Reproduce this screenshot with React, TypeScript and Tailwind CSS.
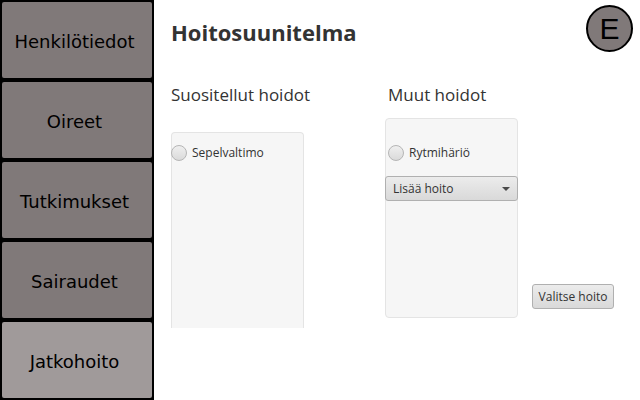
import React from "react";

const steps = ["Henkilötiedot", "Oireet", "Tutkimukset", "Sairaudet", "Jatkohoito"];
const current = "Jatkohoito";

function Sidebar() {
  return (
    <nav className="flex w-[154px] shrink-0 flex-col bg-black font-['DejaVu_Sans',sans-serif] text-[18px] leading-6">
      {steps.map((step) => (
        <button
          key={step}
          type="button"
          aria-current={step === current ? "page" : undefined}
          className={`h-20 rounded border-2 border-black pt-[3px] pr-[5px] text-center text-black ${
            step === current ? "bg-[#a09a9a]" : "bg-[#807979]"
          }`}
        >
          {step}
        </button>
      ))}
    </nav>
  );
}

function TreatmentRadio({ label }: { label: string }) {
  return (
    <label className="flex h-4 items-center gap-[5px] text-[12px] leading-4">
      <input
        type="radio"
        name="treatment"
        className="size-4 shrink-0 appearance-none rounded-full border border-[#b5b5b5] bg-linear-to-b from-[#efefef] to-[#dadada] checked:border-[#555555]"
      />
      {label}
    </label>
  );
}

export default function App() {
  return (
    <div className="flex min-h-screen bg-white font-['Open_Sans','Noto_Sans',sans-serif] text-[#333333]">
      <Sidebar />
      <main className="flex-1 pl-[17px]">
        <header className="flex h-[57px] items-center justify-between pr-[7px]">
          <h1 className="pt-1.5 text-[22px] leading-8 font-bold">Hoitosuunitelma</h1>
          <button
            type="button"
            className="size-[47px] rounded-full border-2 border-black bg-[#807979] text-center font-['Liberation_Sans',sans-serif] text-[30px] leading-10 text-black"
          >
            E
          </button>
        </header>

        <div className="flex items-start pt-[26px]">
          <section className="w-[133px]">
            <h2 className="text-[17px] leading-6 whitespace-nowrap">Suositellut hoidot</h2>
            <div className="mt-[25px] h-[196px] rounded-t-sm border border-b-0 border-[#e4e4e4] bg-[#f6f6f6] pt-3">
              <div className="-ml-px">
                <TreatmentRadio label="Sepelvaltimo" />
              </div>
            </div>
          </section>

          <section className="ml-[81px] w-[133px]">
            <h2 className="pl-[3px] text-[17px] leading-6 whitespace-nowrap">Muut hoidot</h2>
            <div className="mt-[11px] h-[200px] rounded-sm border border-[#e4e4e4] bg-[#f6f6f6] pt-[26px]">
              <div className="pl-[2px]">
                <TreatmentRadio label="Rytmihäriö" />
              </div>
              <div className="relative -mx-px mt-[15px]">
                <select
                  aria-label="Lisää hoito"
                  className="block h-[25px] w-full appearance-none rounded-[3px] border border-[#b0b0b0] bg-linear-to-b from-[#ececec] to-[#d9d9d9] px-[7px] text-[12px] leading-4"
                >
                  <option>Lisää hoito</option>
                </select>
                <svg
                  className="pointer-events-none absolute top-[11px] right-2 h-1 w-2 fill-[#4a4a4a]"
                  viewBox="0 0 8 4"
                >
                  <path d="M0 0h8L4 4z" />
                </svg>
              </div>
            </div>
          </section>

          <button
            type="button"
            className="mb-[19px] ml-[14px] h-[25px] w-[82px] self-end rounded-[3px] border border-[#b0b0b0] bg-linear-to-b from-[#ececec] to-[#d9d9d9] text-center text-[12px] leading-4 whitespace-nowrap"
          >
            Valitse hoito
          </button>
        </div>
      </main>
    </div>
  );
}
